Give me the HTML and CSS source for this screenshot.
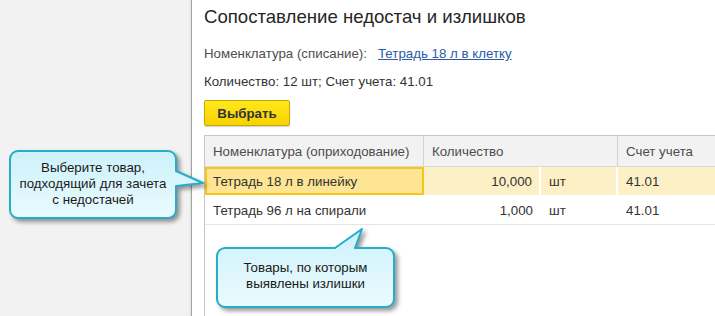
FILE: index.html
```html
<!DOCTYPE html>
<html lang="ru">
<head>
<meta charset="utf-8">
<link rel="stylesheet" href="styles.css">
</head>
<body>
<div class="page">
  <aside class="side"></aside>
  <main class="form">
    <h1 class="title">Сопоставление недостач и излишков</h1>
    <div class="field">
      <span class="label">Номенклатура (списание):</span>
      <a class="link" href="#">Тетрадь 18 л в клетку</a>
    </div>
    <div class="info">Количество: 12 шт; Счет учета: 41.01</div>
    <button class="btn">Выбрать</button>
    <div class="table">
      <div class="hrow">
        <div class="hcell">Номенклатура (оприходование)</div>
        <div class="hcell span2">Количество</div>
        <div class="hcell last">Счет учета</div>
      </div>
      <div class="row selected">
        <div class="cell name current">Тетрадь 18 л в линейку</div>
        <div class="cell num">10,000</div>
        <div class="cell unit">шт</div>
        <div class="cell acct">41.01</div>
      </div>
      <div class="row">
        <div class="cell name">Тетрадь 96 л на спирали</div>
        <div class="cell num">1,000</div>
        <div class="cell unit">шт</div>
        <div class="cell acct">41.01</div>
      </div>
    </div>
  </main>

  <div class="callout callout-left">
    <svg class="bubble" width="215" height="90" viewBox="0 0 215 90">
      <defs>
        <linearGradient id="g1" x1="0" y1="0" x2="0" y2="1">
          <stop offset="0" stop-color="#cdf1fa"/>
          <stop offset="1" stop-color="#e9fbfe"/>
        </linearGradient>
      </defs>
      <path d="M19 6 H169 A8 8 0 0 1 177 14 V26 L204 38 L177 41 V65 A8 8 0 0 1 169 73 H19 A8 8 0 0 1 11 65 V14 A8 8 0 0 1 19 6 Z" fill="url(#g1)" stroke="#27acc9" stroke-width="2" stroke-linejoin="round"/>
    </svg>
    <div class="ctext ctext-left">Выберите товар,<br>подходящий для зачета<br>с недостачей</div>
  </div>

  <div class="callout callout-bottom">
    <svg class="bubble" width="200" height="95" viewBox="0 0 200 95">
      <defs>
        <linearGradient id="g2" x1="0" y1="0" x2="0" y2="1">
          <stop offset="0" stop-color="#cdf1fa"/>
          <stop offset="1" stop-color="#eafbfe"/>
        </linearGradient>
      </defs>
      <path d="M15 24 H125 L152 5 L145 24 H176 A8 8 0 0 1 184 32 V75 A8 8 0 0 1 176 83 H15 A8 8 0 0 1 7 75 V32 A8 8 0 0 1 15 24 Z" fill="url(#g2)" stroke="#27acc9" stroke-width="2" stroke-linejoin="round"/>
    </svg>
    <div class="ctext ctext-bottom">Товары, по которым<br>выявлены излишки</div>
  </div>
</div>
</body>
</html>
```

FILE: styles.css
```css
* { box-sizing: border-box; }
html, body { margin: 0; padding: 0; }
body {
  font-family: Arial, "Liberation Sans", sans-serif;
  background: #ffffff;
}
.page {
  position: relative;
  display: flex;
  width: 715px;
  height: 316px;
  overflow: hidden;
}
.side {
  width: 191px;
  flex: none;
  background: #f2f2f2;
  box-shadow: inset -2px 0 2px -1px rgba(0,0,0,0.08);
}
.form {
  flex: 1;
  min-width: 0;
  border-left: 1px solid #a3a3a3;
  padding: 6px 0 0 12px;
  display: flex;
  flex-direction: column;
  align-items: flex-start;
  overflow: hidden;
}
.title {
  margin: 0;
  font-size: 18.6px;
  line-height: 22px;
  font-weight: normal;
  color: #262626;
  white-space: nowrap;
}
.field {
  margin-top: 18px;
  font-size: 13.3px;
  line-height: 15px;
  display: flex;
  gap: 11px;
  white-space: nowrap;
}
.label { color: #4d4d4d; }
.link {
  color: #2a5ba8;
  text-decoration: underline;
}
.info {
  margin-top: 13px;
  font-size: 13.3px;
  line-height: 15px;
  color: #333333;
  white-space: nowrap;
}
.btn {
  margin-top: 11px;
  width: 86px;
  height: 26px;
  padding: 0;
  border: 1px solid #c9a700;
  border-radius: 2px;
  background: linear-gradient(#ffe81c, #f7d200);
  box-shadow: 0 1px 1px rgba(0,0,0,0.18);
  font-family: Arial, "Liberation Sans", sans-serif;
  font-size: 13.3px;
  font-weight: bold;
  color: #333333;
}
.table {
  margin-top: 9px;
  width: 640px;
  border-top: 1px solid #c6c6c6;
  border-left: 1px solid #c6c6c6;
  flex: 1;
  font-size: 13.3px;
  color: #333333;
}
.hrow, .row {
  display: grid;
  grid-template-columns: 219px 117px 77px 227px;
}
.hrow {
  height: 31px;
  background: #f2f2f2;
  border-bottom: 1px solid #dadada;
}
.hcell {
  display: flex;
  align-items: center;
  padding-left: 8px;
  color: #4d4d4d;
  border-right: 1px solid #d3d3d3;
  white-space: nowrap;
}
.hcell.span2 { grid-column: span 2; }
.hcell.last { border-right: none; }
.row {
  height: 29px;
  border-bottom: 1px solid #e6e6e6;
}
.row.selected {
  background: #fdf0c6;
  border-bottom: 1px solid #ffffff;
}
.cell {
  display: flex;
  align-items: center;
  padding-left: 8px;
  white-space: nowrap;
}
.row.selected .cell { border-right: 2px solid #ffffff; }
.row.selected .cell.acct { border-right: none; }
.cell.name.current {
  background: #fde594;
  border: 2px solid #f6c619;
  padding-left: 6px;
}
.cell.num {
  justify-content: flex-end;
  padding-left: 0;
  padding-right: 8px;
}
.row.selected .cell.num { padding-right: 7px; }
.callout {
  position: absolute;
}
.bubble {
  display: block;
  filter: drop-shadow(3px 3px 2px rgba(0,0,0,0.4));
}
.ctext {
  position: absolute;
  font-size: 13.3px;
  line-height: 16px;
  color: #1a1a1a;
  text-align: center;
  white-space: nowrap;
}
.callout-left {
  left: -1px;
  top: 145px;
}
.ctext-left {
  left: 11px;
  width: 166px;
  top: 15px;
}
.callout-bottom {
  left: 210px;
  top: 224px;
}
.ctext-bottom {
  left: 7px;
  width: 177px;
  top: 36px;
}
```
